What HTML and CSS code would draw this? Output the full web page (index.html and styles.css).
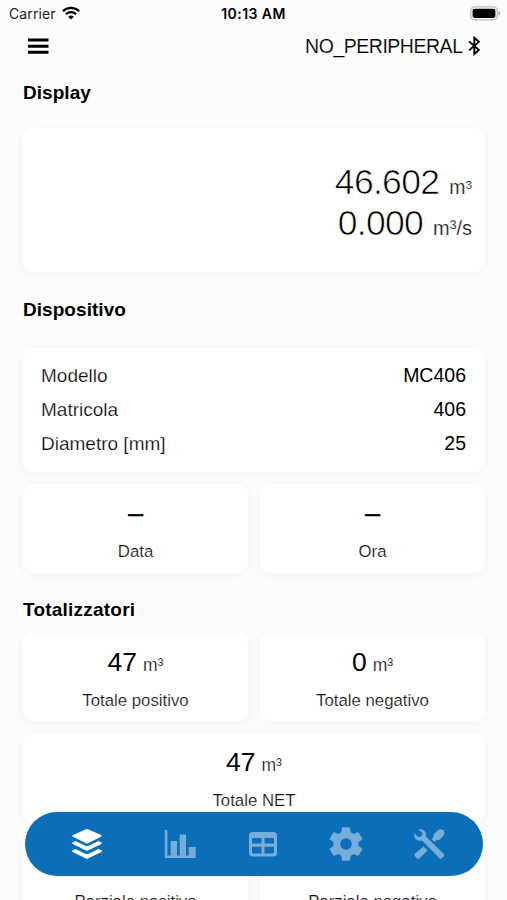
FILE: index.html
```html
<!DOCTYPE html>
<html lang="it">
<head>
<meta charset="utf-8">
<meta name="viewport" content="width=device-width">
<title>Dispositivo</title>
<link rel="stylesheet" href="styles.css">
</head>
<body>
<div class="screen">
  <div class="status">
    <div class="carrier"><span>Carrier</span>
      <svg width="18" height="14" viewBox="0 0 18 14"><g fill="none" stroke="#000" stroke-width="2.3"><path d="M.9 5.2a11.5 11.5 0 0 1 16.2 0"/><path d="M3.9 8.3a7.3 7.3 0 0 1 10.2 0"/></g><path d="M6.2 10.8a4 4 0 0 1 5.6 0L9 13.6z"/></svg>
    </div>
    <div class="clock">10:13 AM</div>
    <div class="power">
      <svg width="31" height="15" viewBox="0 0 31 15"><rect x=".8" y=".8" width="26.4" height="13" rx="3.6" fill="#fff" stroke="#b9b9b9" stroke-width="1.3"/><rect x="2.6" y="2.7" width="22.8" height="9.2" rx="1.8"/><path d="M28.5 5v4.6q1.8-.7 1.8-2.3T28.5 5z" fill="#aaa"/></svg>
    </div>
  </div>
  <header class="topbar">
    <svg width="22" height="18" viewBox="0 0 22 18"><path d="M1 2.9h20.5M1 9.2h20.5M1 15.3h20.5" stroke="#000" stroke-width="3"/></svg>
    <div class="peripheral"><span>NO_PERIPHERAL</span>
      <svg width="13" height="20" viewBox="0 0 13 20"><path d="M1.1 5.4l9.8 8.6L6.3 18V1.8l4.6 4L1.1 14.4" fill="none" stroke="#000" stroke-width="1.9"/></svg>
    </div>
  </header>
  <main>
    <h2>Display</h2>
    <section class="card display">
      <div class="reading"><b>46.602</b><span class="unit">m³</span></div>
      <div class="reading"><b>0.000</b><span class="unit flow">m³/s</span></div>
    </section>
    <h2 class="device-title">Dispositivo</h2>
    <section class="card device">
      <div class="row"><span>Modello</span><b>MC406</b></div>
      <div class="row"><span>Matricola</span><b>406</b></div>
      <div class="row"><span>Diametro [mm]</span><b>25</b></div>
    </section>
    <div class="grid">
      <section class="card tile"><div class="value"><b class="empty">–</b></div><span class="label">Data</span></section>
      <section class="card tile"><div class="value"><b class="empty">–</b></div><span class="label">Ora</span></section>
    </div>
    <h2 class="totals-title">Totalizzatori</h2>
    <div class="grid totals">
      <section class="card tile"><div class="value"><b>47</b><span class="unit">m³</span></div><span class="label">Totale positivo</span></section>
      <section class="card tile"><div class="value"><b>0</b><span class="unit">m³</span></div><span class="label">Totale negativo</span></section>
      <section class="card tile wide"><div class="value"><b>47</b><span class="unit">m³</span></div><span class="label">Totale NET</span></section>
      <section class="card tile"><div class="value"></div><span class="label">Parziale positivo</span></section>
      <section class="card tile"><div class="value"></div><span class="label">Parziale negativo</span></section>
    </div>
  </main>
  <nav class="tabs">
    <svg class="active" width="32" height="32" viewBox="0 0 32 32"><path d="M15 1.3q1-.5 2 0l13 5.6q1.8.9 0 1.8L17 15.2q-1 .5-2 0L2 8.7q-1.8-.9 0-1.8z"/><path d="M1.7 14.4l2.7-1.3 9.9 4.7q1.7.8 3.4 0l9.9-4.7 2.7 1.3q1.5.8 0 1.7L17 22.6q-1 .5-2 0L1.7 16.1q-1.5-.9 0-1.7z"/><path d="M1.7 22.3l2.7-1.3 9.9 4.7q1.7.8 3.4 0l9.9-4.7 2.7 1.3q1.5.8 0 1.7L17 30.5q-1 .5-2 0L1.7 24q-1.5-.9 0-1.7z"/></svg>
    <svg class="chart" width="32" height="32" viewBox="0 0 32 32"><path d="M.8 2h2.6v25.5h3.300V13h6.300v14.500h2.700V6.500h6.300v21h2.700V19h7v11H.8z"/></svg>
    <svg class="table" width="30" height="32" viewBox="0 0 30 32"><path fill-rule="evenodd" d="M4.500 4h21q3.500 0 3.500 3.500V25q0 3.500-3.500 3.500h-21Q1 28.500 1 25V7.500Q1 4 4.500 4zM4 10v5.600h9.500V10zM16.500 10v5.600H26V10zM4 18.700v5.300q0 1.500 1.500 1.500h8v-6.800zM16.500 18.700v6.800h8q1.500 0 1.500-1.500v-5.300z"/></svg>
    <svg class="gear" width="40" height="40" viewBox="0 0 24 24"><path d="M19.5 12c0-.3 0-.65-.07-1l2.18-1.65c.2-.16.24-.43.12-.65l-2.05-3.5c-.13-.24-.4-.32-.63-.24l-2.55 1.05c-.53-.42-1.1-.75-1.72-1L14.4 2.3c-.05-.24-.25-.4-.5-.4h-3.8c-.25 0-.45.16-.5.4L9.2 5.010c-.62.25-1.2.58-1.72 1L4.95 4.960c-.23-.08-.5 0-.63.24l-2.05 3.5c-.12.22-.08.49.12.65L4.57 11c-.1.65-.1 1.35 0 2l-2.18 1.65c-.2.16-.24.43-.12.65l2.05 3.5c.13.24.4.32.63.24l2.53-1.05c.53.42 1.1.75 1.72 1l.4 2.71c.05.24.25.4.5.4h3.8c.25 0 .45-.16.5-.4l.4-2.71c.62-.25 1.2-.58 1.72-1l2.55 1.05c.23.08.5 0 .63-.24l2.05-3.5c.12-.22.08-.49-.12-.65L19.430 13c.07-.35.07-.7.07-1zM12 15.5a3.500 3.500 0 1 1 0-7 3.500 3.500 0 0 1 0 7z"/></svg>
    <svg class="tools" width="32" height="32" viewBox="0 0 32 32"><path d="M5.3 1.5Q9 .4 11.3 2.7q2.5 2.5 1.5 5.6l18 17.8q1 1.1 0 2.2l-2 2q-1.2 1-2.3 0L9 12.400q-3.300 1.100-6-1.200Q.5 8.700 1.400 5.200l4 3.800 2.200-.5 1.500-1.500.4-1.900z"/><path d="M10.600 18.500l3.900 3.900-8.200 8q-1.100.9-2.200 0L1.700 28q-.9-1.100 0-2.200zM27.500 1.200l3.400 1q1 2.800 0 5l-3.800 4q-1.500 1.200-3.400.8l-2.200 2-2.900-3 2-2.100q-.5-1.900.9-3.300l4-3.800z"/></svg>
  </nav>
</div>
</body>
</html>
```
FILE: styles.css
```css
* { box-sizing: border-box; }
body {
  margin: 0;
  background: #fcfcfc;
  color: #000;
  font-family: "Liberation Sans", Arial, sans-serif;
}
.screen { height: 900px; overflow: hidden; }
svg { display: block; flex: none; }
b { font-weight: 400; }
.status {
  display: grid;
  grid-template-columns: 1fr auto 1fr;
  align-items: center;
  height: 28px;
  padding: 0 6px 0 9px;
  font: 14px/28px Inter, sans-serif;
}
.carrier { display: flex; align-items: center; gap: 6px; color: #222; letter-spacing: .1px; }
.carrier svg { margin-top: -3px; }
.clock { font-weight: 600; font-size: 14px; letter-spacing: .45px; margin-right: 3px; }
.power { justify-self: end; margin-top: -1px; }
.topbar {
  display: flex;
  justify-content: space-between;
  align-items: center;
  height: 36px;
  padding: 0 26px 0 27px;
}
.peripheral { display: flex; align-items: center; gap: 5.5px; font-size: 19.5px; letter-spacing: -.48px; }
.peripheral span { -webkit-text-stroke: .15px #fcfcfc; }
main { padding: 0 22px 0 23px; }
h2 { margin: 0; padding-top: 17px; height: 64px; font: bold 19px/24px "Liberation Sans", Arial, sans-serif; letter-spacing: .05px; }
.card { background: #fff; border-radius: 9px; box-shadow: 0 2px 10px rgba(0, 0, 0, .035); }
.display { height: 144px; padding: 34px 13px 0 0; text-align: right; }
.reading { height: 41px; line-height: 41px; white-space: nowrap; }
.reading b { font-size: 35.5px; letter-spacing: -.7px; -webkit-text-stroke: .7px #fff; }
.unit { color: #222; }
.reading .unit { font-size: 19.5px; margin-left: 10px; -webkit-text-stroke: .2px #fff; }
.reading .flow { font-size: 20px; }
.device-title { height: 76px; padding-top: 26px; }
.device { height: 124px; padding: 10px 19px 0 18px; }
.row { display: flex; justify-content: space-between; height: 34.2px; line-height: 34px; font-size: 19px; }
.row span { -webkit-text-stroke: .25px #fff; }
.row b { font-size: 19.5px; }
.row span { padding-top: 1px; }
.grid { display: grid; grid-template-columns: 225px 225px; gap: 12px; margin-top: 12px; }
.tile { height: 88.5px; text-align: center; }
.value { height: 58px; line-height: 59px; white-space: nowrap; }
.value b { font-size: 26.5px; }
.value .empty { -webkit-text-stroke: .6px #000; }
.value .unit { font-size: 17.5px; margin-left: 6px; -webkit-text-stroke: .15px #fff; }
.label { display: block; font-size: 16.8px; line-height: 20px; color: #111; -webkit-text-stroke: .2px #fff; }
.totals-title { height: 60px; padding-top: 25px; letter-spacing: .22px; }
.totals { margin-top: 0; }
.wide { grid-column: span 2; }
.tabs {
  position: fixed;
  left: 25px;
  top: 812px;
  width: 458px;
  height: 64px;
  padding-left: 46px;
  border-radius: 32px;
  display: flex;
  align-items: center;
  background: #0a6eb9;
}
.tabs svg { fill: #76add9; }
.tabs .active { fill: #fff; }
.chart { margin-left: 61px; }
.table { margin-left: 52px; }
.gear { margin-left: 47.5px; }
.tools { margin-left: 47.5px; }
```
